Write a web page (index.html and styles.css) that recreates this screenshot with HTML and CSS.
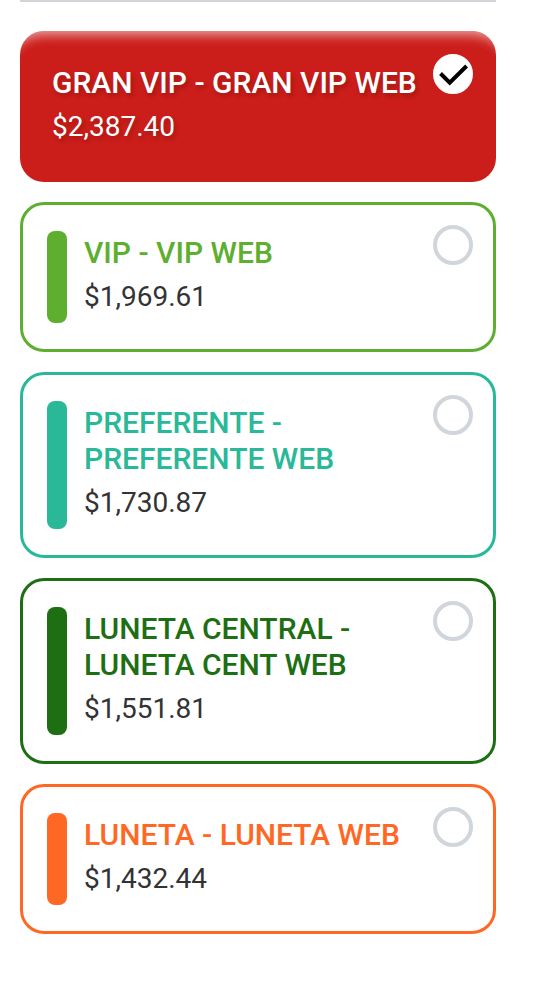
FILE: index.html
```
<!DOCTYPE html>
<html lang="es">
<head>
  <meta charset="UTF-8">
  <meta name="viewport" content="width=device-width, initial-scale=1.0">
  <title>Zonas</title>
  <link rel="stylesheet" href="styles.css">
</head>
<body>
  <form class="zones">
    <label class="zone gran-vip">
      <span class="info">
        <span class="name">GRAN VIP - GRAN VIP WEB</span>
        <span class="price">$2,387.40</span>
      </span>
      <span class="pick">
        <input type="radio" name="zone" value="gran-vip" checked>
        <svg class="check" viewBox="0 0 40 40" aria-hidden="true"><path d="M7.5 19.5L16.7 28.6L33.6 12"/></svg>
      </span>
    </label>

    <label class="zone vip">
      <span class="stripe"></span>
      <span class="info">
        <span class="name">VIP - VIP WEB</span>
        <span class="price">$1,969.61</span>
      </span>
      <span class="pick">
        <input type="radio" name="zone" value="vip">
      </span>
    </label>

    <label class="zone preferente">
      <span class="stripe"></span>
      <span class="info">
        <span class="name">PREFERENTE - PREFERENTE WEB</span>
        <span class="price">$1,730.87</span>
      </span>
      <span class="pick">
        <input type="radio" name="zone" value="preferente">
      </span>
    </label>

    <label class="zone luneta-central">
      <span class="stripe"></span>
      <span class="info">
        <span class="name">LUNETA CENTRAL - LUNETA CENT WEB</span>
        <span class="price">$1,551.81</span>
      </span>
      <span class="pick">
        <input type="radio" name="zone" value="luneta-central">
      </span>
    </label>

    <label class="zone luneta">
      <span class="stripe"></span>
      <span class="info">
        <span class="name">LUNETA - LUNETA WEB</span>
        <span class="price">$1,432.44</span>
      </span>
      <span class="pick">
        <input type="radio" name="zone" value="luneta">
      </span>
    </label>
  </form>
</body>
</html>
```
FILE: styles.css
```
* {
  box-sizing: border-box;
}
body {
  margin: 0;
  padding: 0 40px 40px 20px;
  background-color: #fff;
  font-family: Roboto, sans-serif;
}
.zones {
  display: flex;
  flex-direction: column;
  gap: 20px;
  padding-top: 29px;
  border-top: 2px solid #d1d5da;
}
.zone {
  display: flex;
  padding: 20px 20px 20px 24px;
  border: 3px solid var(--color);
  border-radius: 24px;
  cursor: pointer;
}
.stripe {
  flex: none;
  width: 20px;
  margin: 6px 17px 6px 0;
  border-radius: 8px;
  background-color: var(--color);
}
.info {
  flex: 1;
  display: flex;
  flex-direction: column;
  gap: 8px;
  padding: 10px 0 14px;
}
.name {
  color: var(--color);
  font-size: 30px;
  font-weight: 500;
  line-height: 36px;
}
.price {
  color: #333;
  font-size: 28px;
  line-height: 36px;
}

/* radio */
.pick {
  position: relative;
  flex: none;
  width: 40px;
  height: 40px;
}
.pick input {
  appearance: none;
  display: block;
  width: 40px;
  height: 40px;
  margin: 0;
  border: 4px solid #d1d6dc;
  border-radius: 50%;
  background-color: #fff;
}
.pick input:checked {
  border-color: #fff;
}
.check {
  position: absolute;
  inset: 0;
  fill: none;
  stroke: #000;
  stroke-width: 4;
  pointer-events: none;
}

/* zone colors */
.vip {
  --color: #5eae30;
}
.preferente {
  --color: #29b999;
}
.luneta-central {
  --color: #1e6e14;
}
.luneta {
  --color: #ff6824;
}

/* selected zone is filled, no border */
.gran-vip {
  padding: 23px 23px 23px 32px;
  border: none;
  background-color: #cb1d19;
  box-shadow: inset 0 20px 12px -16px rgba(255, 255, 255, 0.6);
}
.gran-vip .info {
  padding-top: 11px;
}
.gran-vip .name,
.gran-vip .price {
  color: #fff;
  text-shadow: 2px 3px 4px rgba(0, 0, 0, 0.2);
}
```
